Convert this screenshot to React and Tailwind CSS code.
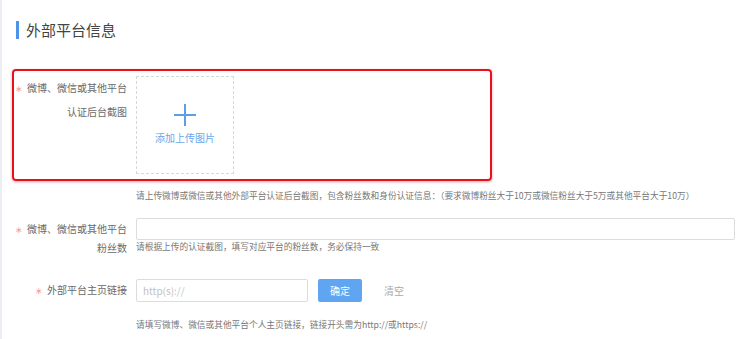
import React from "react";

const Star = () => <span className="text-[#f0a0a0] mr-[4px] text-[9px]">∗</span>;

const App = () => {
  return (
    <div
      className="w-[746px] h-[339px] bg-white border-l-2 border-[#eceef3] pt-[21px] overflow-hidden"
      style={{ fontFamily: '"Noto Sans CJK SC", "Noto Sans", sans-serif' }}
    >
      {/* section title */}
      <div className="flex items-center ml-[14px] h-[18px]">
        <div className="w-[3px] h-[18px] bg-[#4d94e8]" />
        <div className="ml-[7px] text-[15px] leading-[18px] text-[#444]">外部平台信息</div>
      </div>

      {/* highlighted row: screenshot upload */}
      <div className="ml-[10px] mt-[30px] w-[480px] h-[112px] border-2 border-[#e8121c] rounded-[4px] shadow-[0_1px_3px_rgba(200,0,0,0.35)] pt-[5px] flex">
        <div className="w-[113px] text-right text-[10px] leading-[23px] text-[#6a6a6a]">
          <div>
            <Star />
            微博、微信或其他平台
          </div>
          <div>认证后台截图</div>
        </div>
        <div className="ml-[9px] w-[98px] h-[98px] border border-dashed border-[#d8d8d8] flex flex-col items-center pt-[27px]">
          <svg width="22" height="22" viewBox="0 0 22 22" fill="none">
            <path d="M11 0v22M0 11h22" stroke="#5e9ee9" strokeWidth="2" />
          </svg>
          <div className="mt-[6px] text-[10px] leading-[12px] text-[#6aa6ea]">添加上传图片</div>
        </div>
      </div>

      <div className="ml-[134px] mt-[9px] text-[8.7px] leading-[12px] text-[#777]">
        请上传微博或微信或其他外部平台认证后台截图，包含粉丝数和身份认证信息：（要求微博粉丝大于10万或微信粉丝大于5万或其他平台大于10万）
      </div>

      {/* followers */}
      <div className="flex mt-[16px]">
        <div className="w-[125px] text-right text-[10px] leading-[18px] text-[#6a6a6a] pt-[2px]">
          <div>
            <Star />
            微博、微信或其他平台
          </div>
          <div>粉丝数</div>
        </div>
        <div className="ml-[9px]">
          <input
            type="text"
            className="block w-[599px] h-[22px] border border-[#dcdcdc] rounded-[2px] outline-none px-[6px] text-[10px]"
          />
          <div className="mt-[1px] text-[8.7px] leading-[12px] text-[#777]">
            请根据上传的认证截图，填写对应平台的粉丝数，务必保持一致
          </div>
        </div>
      </div>

      {/* homepage link */}
      <div className="flex items-center mt-[21px]">
        <div className="w-[125px] text-right text-[10px] leading-[23px] text-[#6a6a6a]">
          <Star />
          外部平台主页链接
        </div>
        <input
          type="text"
          placeholder="http(s)://"
          className="ml-[9px] w-[172px] h-[23px] border border-[#dcdcdc] rounded-[2px] outline-none px-[6px] text-[10px] text-[#555] placeholder:text-[#c2c2c2]"
        />
        <button className="ml-[10px] w-[44px] h-[23px] bg-[#5fa5f2] rounded-[2px] text-white text-[10px]">确定</button>
        <button className="ml-[22px] text-[10px] text-[#aaa]">清空</button>
      </div>

      <div className="ml-[134px] mt-[17px] text-[8.7px] leading-[12px] text-[#777]">
        请填写微博、微信或其他平台个人主页链接，链接开头需为http://或https://
      </div>
    </div>
  );
};

export default App;
